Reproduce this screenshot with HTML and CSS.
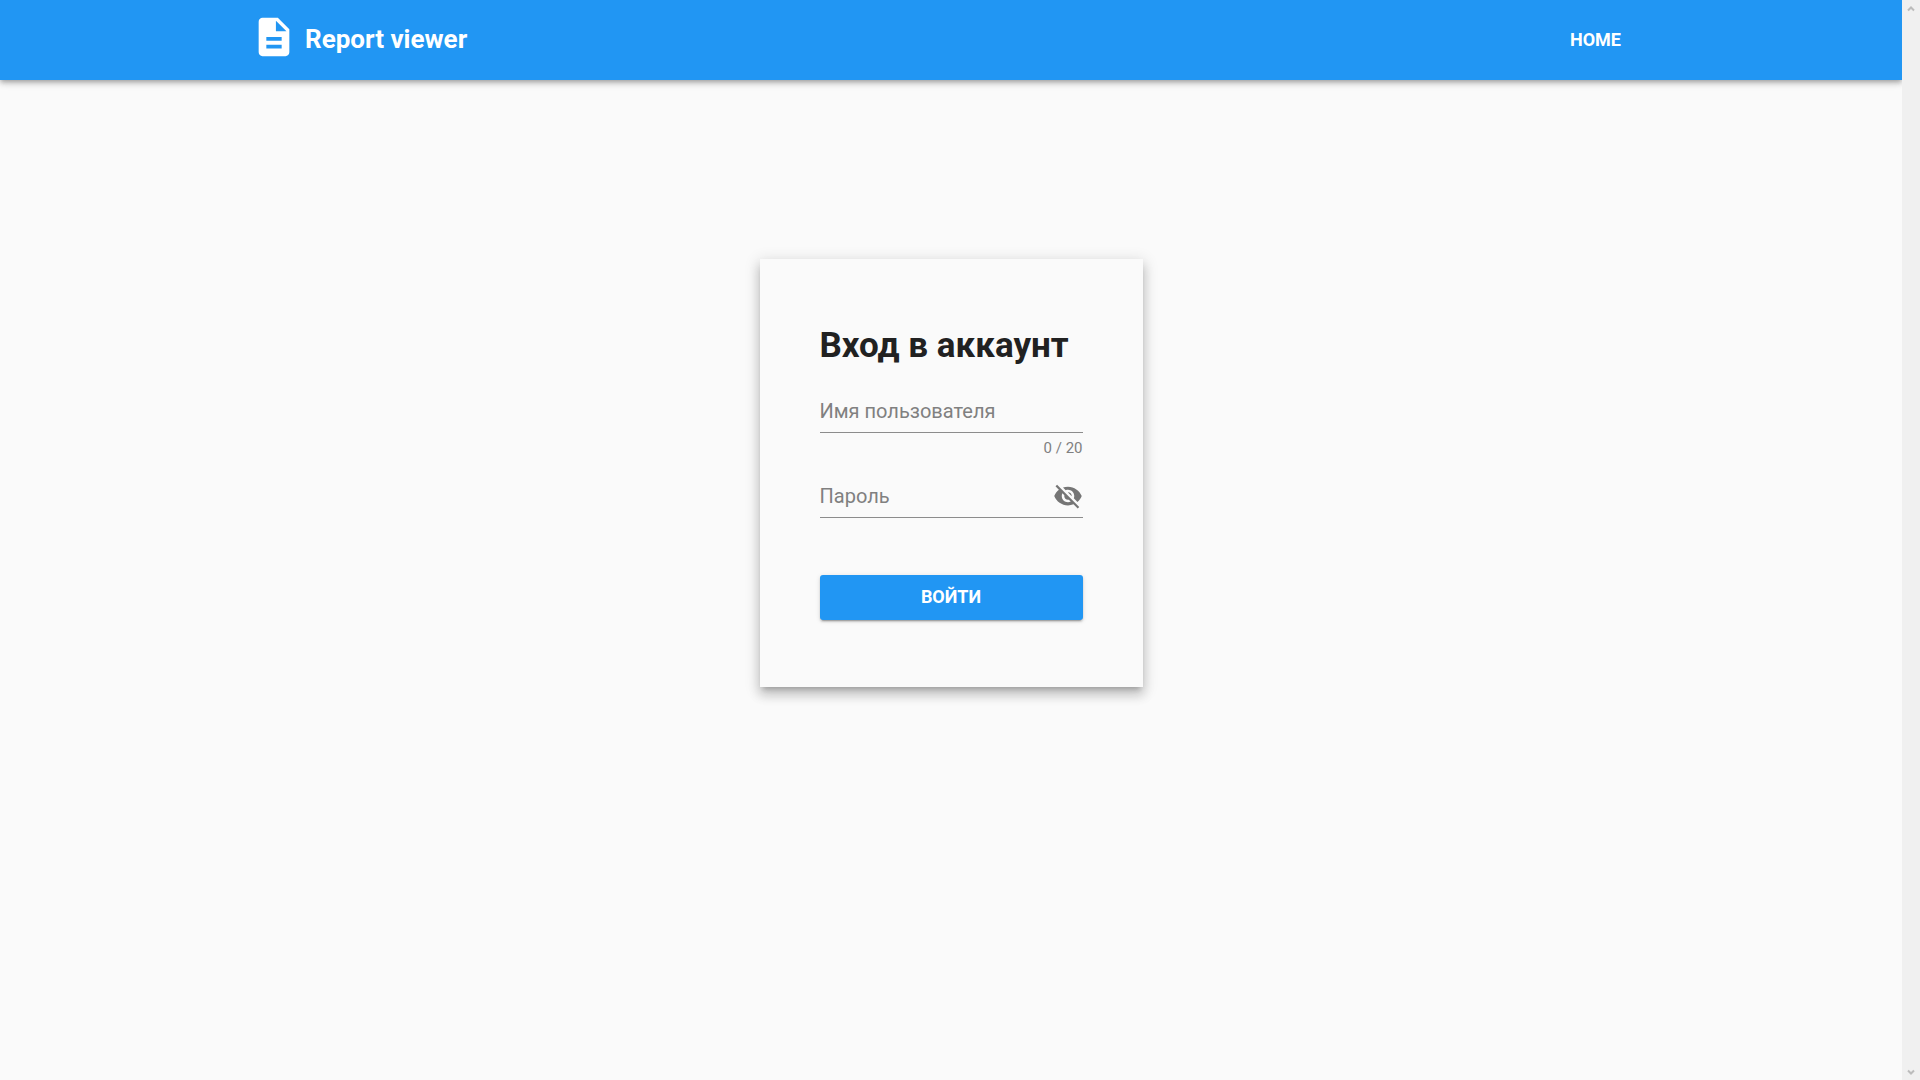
FILE: index.html
```html
<!DOCTYPE html>
<html lang="ru">
<head>
<meta charset="utf-8">
<meta name="viewport" content="width=device-width, initial-scale=1">
<title>Report viewer</title>
<link rel="stylesheet" href="styles.css">
</head>
<body>
<div class="page">
  <header class="header">
    <nav class="nav">
      <a class="brand" href="#">
        <svg class="brand-icon" viewBox="0 0 24 24" aria-hidden="true"><path fill="currentColor" d="M14 2H6c-1.100 0-2 .9-2 2v16c0 1.100.9 2 2 2h12c1.100 0 2-.9 2-2V8l-6-6zm2 16H8v-2h8v2zm0-4H8v-2h8v2zm-3-5V3.500L18.500 9H13z"/></svg>
        <span class="brand-name">Report viewer</span>
      </a>
      <a class="nav-link" href="#">HOME</a>
    </nav>
  </header>
  <main class="main">
    <form class="card">
      <h1 class="title">Вход в аккаунт</h1>
      <div class="field">
        <input class="input" type="text" maxlength="20" placeholder="Имя пользователя" aria-label="Имя пользователя">
      </div>
      <div class="counter">0 / 20</div>
      <div class="field">
        <input class="input" type="password" placeholder="Пароль" aria-label="Пароль">
        <button class="toggle" type="button" aria-label="Показать пароль">
          <svg class="toggle-icon" viewBox="0 0 24 24" aria-hidden="true"><path fill="currentColor" d="M12 7c2.760 0 5 2.240 5 5 0 .65-.13 1.260-.36 1.830l2.920 2.920c1.510-1.260 2.700-2.890 3.430-4.750-1.730-4.390-6-7.500-11-7.500-1.400 0-2.740.25-3.980.7l2.160 2.160C10.740 7.130 11.350 7 12 7zM2 4.270l2.280 2.280.46.46C3.080 8.300 1.780 10.020 1 12c1.730 4.390 6 7.500 11 7.500 1.550 0 3.030-.3 4.380-.84l.42.42L19.730 22 21 20.730 3.270 3 2 4.270zM7.530 9.800l1.550 1.550c-.05.21-.08.43-.08.65 0 1.660 1.340 3 3 3 .22 0 .44-.03.65-.08l1.550 1.550c-.67.33-1.410.53-2.200.53-2.760 0-5-2.240-5-5 0-.79.2-1.530.53-2.200zm4.310-.78l3.150 3.150.02-.16c0-1.660-1.340-3-3-3l-.17.01z"/></svg>
        </button>
      </div>
      <button class="submit" type="submit">ВОЙТИ</button>
    </form>
  </main>
</div>
<div class="scroll-track" aria-hidden="true">
  <svg class="scroll-arrow" viewBox="0 0 8 8"><path d="M1 5.500l3-3 3 3" fill="none" stroke="currentColor" stroke-width="2"/></svg>
  <svg class="scroll-arrow" viewBox="0 0 8 8"><path d="M1 2.500l3 3 3-3" fill="none" stroke="currentColor" stroke-width="2"/></svg>
</div>
</body>
</html>
```
FILE: styles.css
```css
* {
  box-sizing: border-box;
}

body {
  margin: 0;
  min-height: 100vh;
  display: flex;
  background: #fafafa;
  color: #212121;
  font-family: Roboto, "Liberation Sans", sans-serif;
}

.page {
  flex: 1;
  min-width: 0;
  overflow: hidden;
}

.header {
  background: #2196f3;
  color: #fff;
  box-shadow: 0 2px 4px -1px rgba(0, 0, 0, .2), 0 4px 5px rgba(0, 0, 0, .14), 0 1px 10px rgba(0, 0, 0, .12);
}

.nav {
  display: flex;
  align-items: center;
  justify-content: space-between;
  max-width: 1400px;
  height: 80px;
  margin: 0 auto;
  padding-bottom: 2px;
}

.brand {
  display: flex;
  align-items: center;
  gap: 8px;
  color: inherit;
  text-decoration: none;
}

.brand-icon {
  width: 46px;
  height: 46px;
  margin-bottom: 4px;
}

.brand-name {
  font-size: 26px;
  font-weight: 700;
}

.nav-link {
  padding: 0 30px;
  color: inherit;
  font-size: 18px;
  font-weight: 700;
  text-decoration: none;
}

.main {
  display: flex;
  justify-content: center;
  padding: 179px 20px 60px;
}

.card {
  display: flex;
  flex-direction: column;
  width: 383px;
  padding: 61px 60px 67px;
  background: #fafafa;
  box-shadow: 0 5px 5px -3px rgba(0, 0, 0, .2), 0 8px 10px 1px rgba(0, 0, 0, .14), 0 3px 14px 2px rgba(0, 0, 0, .12);
}

.title {
  margin: 0 0 19px;
  font-size: 35px;
  font-weight: 700;
  line-height: 52px;
  white-space: nowrap;
}

.field {
  display: flex;
  align-items: center;
  height: 42px;
  padding-bottom: 2px;
  border-bottom: 1px solid #8c8c8c;
}

.input {
  flex: 1;
  min-width: 0;
  height: 38px;
  padding: 0;
  border: 0;
  outline: 0;
  background: none;
  color: inherit;
  font: 400 20px Roboto, "Liberation Sans", sans-serif;
}

.input::placeholder {
  color: #808080;
  opacity: 1;
}

.counter {
  margin-bottom: 13px;
  color: #808080;
  font-size: 15px;
  line-height: 30px;
  text-align: right;
}

.toggle {
  display: flex;
  padding: 0;
  border: 0;
  background: none;
  color: #757575;
}

.toggle-icon {
  width: 30px;
  height: 30px;
}

.submit {
  height: 45px;
  margin-top: 57px;
  padding: 0 0 2px;
  border: 0;
  border-radius: 3px;
  background: #2196f3;
  box-shadow: 0 3px 1px -2px rgba(0, 0, 0, .2), 0 2px 2px rgba(0, 0, 0, .14), 0 1px 5px rgba(0, 0, 0, .12);
  color: #fff;
  font: 700 18px Roboto, "Liberation Sans", sans-serif;
}

.scroll-track {
  display: flex;
  flex-direction: column;
  align-items: center;
  justify-content: space-between;
  width: 18px;
  padding: 5px 0 4px;
  background: #f0f0f0;
  color: #bcbcbc;
}

.scroll-arrow {
  width: 8px;
  height: 8px;
}
```
